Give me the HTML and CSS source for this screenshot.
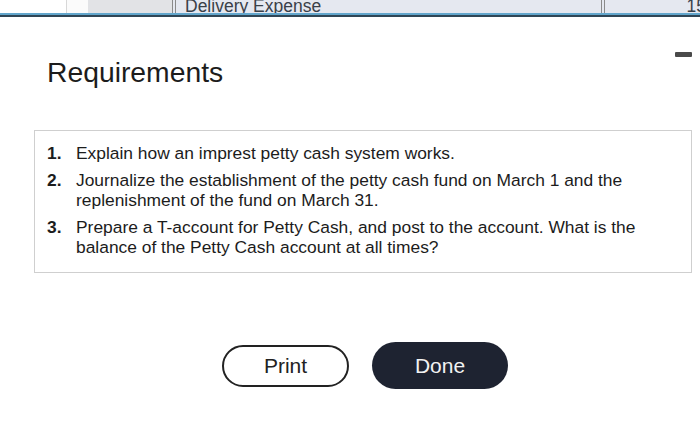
FILE: index.html
```html
<!DOCTYPE html>
<html>
<head>
<meta charset="utf-8">
<link rel="stylesheet" href="styles.css">
</head>
<body>
<div class="topbar">
  <div class="cell c-white1"></div>
  <div class="cell c-white2"></div>
  <div class="cell c-gray"></div>
  <div class="cell c-text">Delivery Expense</div>
  <div class="cell c-num">15</div>
</div>
<div class="stripe-blue"></div>
<div class="stripe-dark"></div>
<main class="modal">
  <div class="head">
    <h1 class="title">Requirements</h1>
    <span class="minimize"></span>
  </div>
  <ol class="reqs">
    <li><span class="num">1.</span><span class="txt">Explain how an imprest petty cash system works.</span></li>
    <li><span class="num">2.</span><span class="txt">Journalize the establishment of the petty cash fund on March 1 and the replenishment of the fund on March 31.</span></li>
    <li><span class="num">3.</span><span class="txt">Prepare a T-account for Petty Cash, and post to the account. What is the balance of the Petty Cash account at all times?</span></li>
  </ol>
  <div class="actions">
    <button class="btn btn-print">Print</button>
    <button class="btn btn-done">Done</button>
  </div>
</main>
</body>
</html>
```
FILE: styles.css
```css
html, body {
  margin: 0;
  padding: 0;
  background: #ffffff;
  font-family: "Liberation Sans", Arial, sans-serif;
  color: #1a1a1a;
  width: 700px;
  height: 425px;
  overflow: hidden;
}
.topbar {
  display: flex;
  height: 13px;
  overflow: hidden;
  background: #e5e8f0;
}
.cell {
  height: 13px;
  box-sizing: border-box;
}
.c-white1 {
  width: 67px;
  background: #ffffff;
  border-right: 1px solid #d8d8d8;
}
.c-white2 {
  width: 21px;
  background: #fbfbfb;
}
.c-gray {
  width: 85px;
  background: #e2e3e6;
  border-right: 1px solid #8a8a8a;
}
.c-text {
  width: 427px;
  margin-left: 2px;
  border-left: 1px solid #8a8a8a;
  border-right: 1px solid #8a8a8a;
  padding-left: 9px;
  font-size: 17.5px;
  line-height: 12px;
  color: #3a4048;
  white-space: nowrap;
}
.c-num {
  flex: 1;
  margin-left: 2px;
  border-left: 1px solid #8a8a8a;
  text-align: right;
  font-size: 17.5px;
  line-height: 12px;
  color: #3a4048;
  margin-right: -6px;
}
.stripe-blue {
  height: 2px;
  background: #62a6cc;
}
.stripe-dark {
  height: 2px;
  background: #2f4656;
}
.modal {
  padding: 0 8px 0 34px;
}
.head {
  display: flex;
  justify-content: space-between;
  align-items: flex-start;
  padding-top: 38px;
}
.title {
  margin: 0 0 0 13px;
  font-size: 28.3px;
  font-weight: normal;
  line-height: 34px;
  color: #1c1c1c;
}
.minimize {
  width: 17px;
  height: 5px;
  background: #4a4a4a;
  border-radius: 1px;
  margin-top: -3px;
}
.reqs {
  list-style: none;
  margin: 41px 0 0 0;
  padding: 12px 20px 15px 12px;
  border: 1px solid #cfcfcf;
  font-size: 17.4px;
  line-height: 20px;
  color: #1c1c1c;
}
.reqs li {
  display: flex;
  margin-bottom: 7px;
}
.reqs li:last-child {
  margin-bottom: 0;
}
.num {
  width: 29px;
  flex: none;
  font-weight: bold;
}
.actions {
  display: flex;
  justify-content: center;
  align-items: center;
  gap: 23px;
  margin-top: 69px;
  padding-left: 4px;
}
.btn {
  font-family: "Liberation Sans", Arial, sans-serif;
  font-size: 21px;
  border-radius: 24px;
  cursor: pointer;
}
.btn-print {
  width: 127px;
  height: 42px;
  background: #ffffff;
  border: 2px solid #222222;
  color: #222222;
}
.btn-done {
  width: 136px;
  height: 47px;
  background: #1e2331;
  border: none;
  color: #f2f2f2;
}
```
